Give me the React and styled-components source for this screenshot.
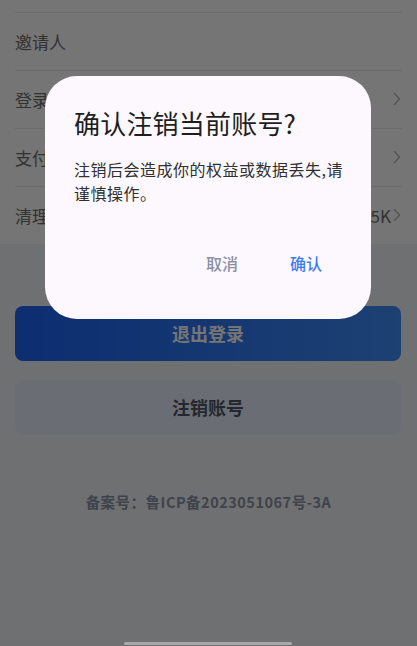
import React from "react";
import styled, { createGlobalStyle } from "styled-components";

const Global = createGlobalStyle`
  html, body { margin: 0; padding: 0; }
  body {
    background: #f2f4f9;
    font-family: "Noto Sans CJK SC", "Noto Sans", sans-serif;
    width: 417px;
    height: 646px;
    overflow: hidden;
  }
`;

const Page = styled.div`
  width: 417px;
  height: 646px;
  display: flex;
  flex-direction: column;
  background: #f2f4f9;
`;

const List = styled.div`
  background: #ffffff;
  padding-top: 12px;
  display: flex;
  flex-direction: column;
`;

const Row = styled.div`
  margin: 0 15px;
  height: 58px;
  display: flex;
  align-items: center;
  justify-content: space-between;
  border-top: 1px solid #ececec;
  box-sizing: border-box;
  font-size: 17px;
  padding-bottom: 1px;
`;

const Label = styled.span`
  color: #6e6e6e;
`;

const Right = styled.span`
  display: flex;
  align-items: center;
  gap: 1px;
  color: #6e6e6e;
  font-size: 17px;
`;

const Chevron = () => (
  <svg width="10" height="16" viewBox="0 0 10 16" fill="none">
    <path d="M2.5 2.5 L7.5 8 L2.5 13.5" stroke="#b8b8b8" strokeWidth="1.4" strokeLinecap="round" strokeLinejoin="round" />
  </svg>
);

const Actions = styled.div`
  display: flex;
  flex-direction: column;
  gap: 19px;
  padding: 62px 16px 0 15px;
`;

const Button = styled.div`
  height: 55px;
  border-radius: 8px;
  display: flex;
  align-items: center;
  justify-content: center;
  font-size: 18px;
  font-weight: 700;
  padding-bottom: 2px;
  box-sizing: border-box;
  background: ${(p) => (p.$primary ? "linear-gradient(90deg, #1c63f6 0%, #3f8ef9 100%)" : "#e8eefb")};
  color: ${(p) => (p.$primary ? "#ffffff" : "#505666")};
`;

const Record = styled.div`
  margin-top: 56px;
  text-align: center;
  font-size: 14.5px;
  font-weight: 700;
  letter-spacing: 0.5px;
  color: #8a92a6;
`;

const Overlay = styled.div`
  position: fixed;
  inset: 0;
  background: rgba(0, 0, 0, 0.54);
  display: flex;
  justify-content: flex-start;
  align-items: flex-start;
  padding: 76px 0 0 45px;
  box-sizing: border-box;
`;

const Dialog = styled.div`
  width: 326px;
  height: 243px;
  box-sizing: border-box;
  background: #fdf8fe;
  border-radius: 32px;
  padding: 28px 28px 0 29px;
  display: flex;
  flex-direction: column;
`;

const Title = styled.div`
  font-size: 26px;
  line-height: 38px;
  color: #1e1e1e;
  letter-spacing: 0.2px;
`;

const Message = styled.div`
  margin-top: 15px;
  font-size: 16px;
  line-height: 24px;
  letter-spacing: 0.5px;
  color: #303030;
`;

const DialogButtons = styled.div`
  margin-top: auto;
  margin-bottom: 44px;
  display: flex;
  justify-content: flex-end;
  gap: 52px;
  padding-right: 21px;
`;

const DialogButton = styled.span`
  font-size: 16px;
  font-weight: 500;
  line-height: 24px;
  color: ${(p) => (p.$confirm ? "#3b7cf2" : "#8b90a4")};
`;

const HomeBar = styled.div`
  position: fixed;
  left: 124px;
  bottom: 1px;
  width: 168px;
  height: 3px;
  border-radius: 2px;
  background: #a8a8a8;
`;

export default function App() {
  const rows = [
    { label: "邀请人", value: null, arrow: false },
    { label: "登录设备", value: null, arrow: true },
    { label: "支付设置", value: null, arrow: true },
    { label: "清理缓存", value: "12.5K", arrow: true },
  ];
  return (
    <>
      <Global />
      <Page>
        <List>
          {rows.map((r) => (
            <Row key={r.label}>
              <Label>{r.label}</Label>
              <Right>
                {r.value && <span>{r.value}</span>}
                {r.arrow && <Chevron />}
              </Right>
            </Row>
          ))}
        </List>
        <Actions>
          <Button $primary>退出登录</Button>
          <Button>注销账号</Button>
        </Actions>
        <Record>备案号：鲁ICP备2023051067号-3A</Record>
      </Page>
      <Overlay>
        <Dialog>
          <Title>确认注销当前账号?</Title>
          <Message>注销后会造成你的权益或数据丢失,请谨慎操作。</Message>
          <DialogButtons>
            <DialogButton>取消</DialogButton>
            <DialogButton $confirm>确认</DialogButton>
          </DialogButtons>
        </Dialog>
      </Overlay>
      <HomeBar />
    </>
  );
}
